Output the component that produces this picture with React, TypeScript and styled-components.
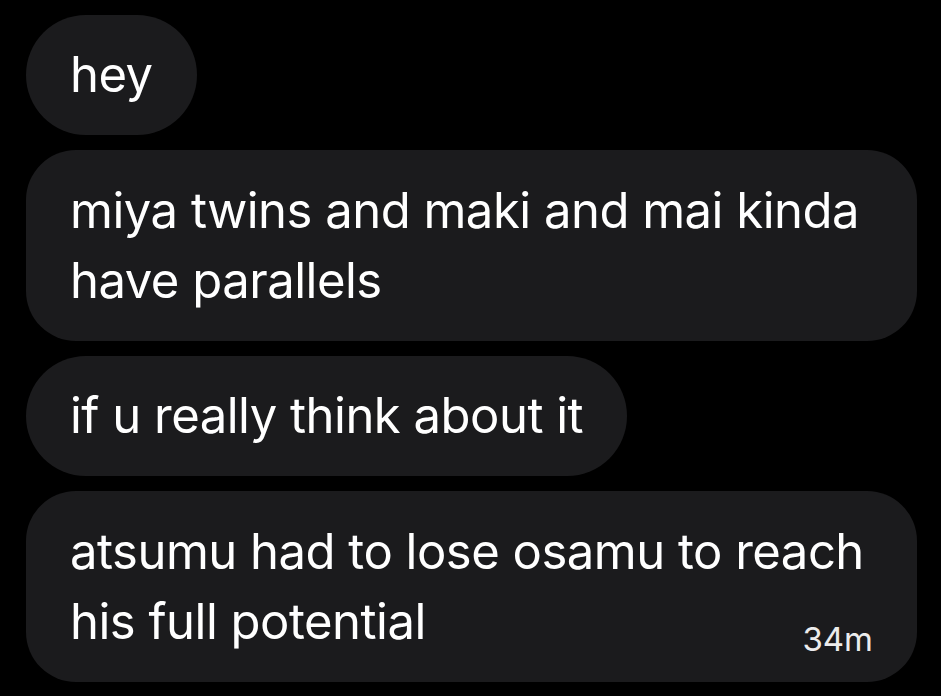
import React from "react";
import styled, { createGlobalStyle } from "styled-components";

const Global = createGlobalStyle`
  html, body {
    margin: 0;
    padding: 0;
    background: #000;
  }
  body {
    font-family: Inter, Roboto, "Liberation Sans", Arial, sans-serif;
    -webkit-font-smoothing: antialiased;
  }
`;

const Thread = styled.div`
  display: flex;
  flex-direction: column;
  align-items: flex-start;
  gap: 15px;
  padding: 15px 24px 16px 26px;
  width: 941px;
  height: 696px;
  box-sizing: border-box;
  background: #000;
  overflow: hidden;
`;

const Bubble = styled.div<{ $multi?: boolean }>`
  display: flow-root;
  box-sizing: border-box;
  max-width: 100%;
  padding: ${(p) => (p.$multi ? "26px 44px 25px 44px" : "25px 44px")};
  border-radius: ${(p) => (p.$multi ? "50px" : "60px")};
  background: #1b1b1d;
  color: #ffffff;
  font-size: 49px;
  line-height: 70px;
  font-weight: 400;
  letter-spacing: -0.5px;
`;

const Time = styled.span`
  float: right;
  margin: 17px 0 -17px 24px;
  font-size: 33px;
  line-height: 70px;
  color: #ececec;
  letter-spacing: 0;
`;

export default function App() {
  return (
    <>
      <Global />
      <Thread>
        <Bubble>hey</Bubble>
        <Bubble $multi>miya twins and maki and mai kinda have parallels</Bubble>
        <Bubble>if u really think about it</Bubble>
        <Bubble $multi>
          atsumu had to lose osamu to reach his full potential
          <Time>34m</Time>
        </Bubble>
      </Thread>
    </>
  );
}
